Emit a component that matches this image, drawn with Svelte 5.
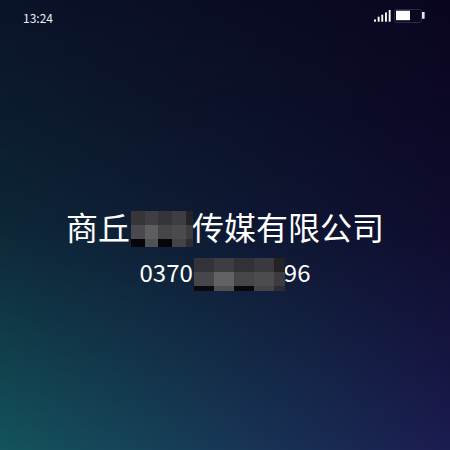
<script lang="ts">
	// greys of the blurred-out blocks, row by row
	const nameCells = [
		'#36363a', '#3f3f43', '#353539', '#3e3e42', '#242427',
		'#4a4a4e', '#5e5e62', '#46464a', '#4b4b4f', '#3d3d41',
		'#06060a', '#525256', '#06060a', '#444448', '#2d2d30'
	];
	const phoneCells = [
		'#343438', '#3e3e42', '#323236', '#3a3a3e', '#232326',
		'#47474b', '#626266', '#46464a', '#4c4c50', '#3c3c40',
		'#0a0a0e', '#4f4f54', '#08080c', '#444448', '#2d2d30'
	];
	const bars = [
		{ x: 0, h: 2.3 },
		{ x: 3.7, h: 5 },
		{ x: 7.3, h: 7 },
		{ x: 11, h: 9.3 },
		{ x: 14.7, h: 11.7 }
	];
</script>

<div class="screen">
	<div class="status">
		<span class="time">13:24</span>
		<div class="icons">
			<svg width="17" height="13" viewBox="0 0 17 13">
				{#each bars as b}
					<rect x={b.x} y={12.7 - b.h} width="1.9" height={b.h} fill="#fff" />
				{/each}
			</svg>
			<svg width="31" height="14" viewBox="0 0 31 14">
				<rect x="0.5" y="0.5" width="27" height="13" rx="2" fill="none" stroke="#2a2a44" />
				<rect x="2" y="1.7" width="14" height="9.5" fill="#fff" />
				<rect x="28" y="3" width="2.6" height="6.7" fill="#e8e8e8" />
			</svg>
		</div>
	</div>

	<div class="card">
		<div class="name">
			<span>商丘</span>
			<div class="mosaic name-mosaic">
				{#each nameCells as c}
					<i style="background: {c}"></i>
				{/each}
			</div>
			<span>传媒有限公司</span>
		</div>
		<div class="phone">
			<span>0370</span>
			<div class="mosaic phone-mosaic">
				{#each phoneCells as c}
					<i style="background: {c}"></i>
				{/each}
			</div>
			<span>96</span>
		</div>
	</div>
</div>

<style>
	:global(body) {
		margin: 0;
	}

	.screen {
		position: relative;
		width: 450px;
		height: 450px;
		box-sizing: border-box;
		overflow: hidden;
		color: #fff;
		font-family: 'Noto Sans CJK SC', 'Noto Sans', sans-serif;
		background: linear-gradient(to right, #0b1429, #0a0620);
	}

	/* bottom corners fade in over the top ones */
	.screen::before {
		content: '';
		position: absolute;
		inset: 0;
		background: linear-gradient(to right, #14545c, #1b1c50);
		mask-image: linear-gradient(
			to bottom,
			transparent 0%,
			rgba(0, 0, 0, 0.1) 22%,
			rgba(0, 0, 0, 0.29) 50%,
			rgba(0, 0, 0, 0.68) 78%,
			#000 100%
		);
	}

	.status,
	.card {
		position: relative;
	}

	.status {
		display: flex;
		justify-content: space-between;
		align-items: flex-start;
		height: 36px;
		padding: 9px 25px 0 23px;
		box-sizing: border-box;
	}

	.time {
		font-size: 12px;
		line-height: 18px;
		color: #eceef2;
	}

	.icons {
		display: flex;
		gap: 3px;
	}

	.icons svg {
		display: block;
	}

	.card {
		display: flex;
		flex-direction: column;
		align-items: center;
		padding-top: 170px;
	}

	.name,
	.phone {
		display: flex;
		align-items: center;
	}

	.name {
		height: 40px;
		font-size: 32px;
		line-height: 40px;
	}

	.phone {
		height: 34px;
		margin-top: 9px;
		font-size: 24px;
		line-height: 34px;
	}

	.mosaic {
		display: grid;
		flex: none;
		margin-left: 1px;
		margin-right: -1px;
		filter: blur(0.4px);
	}

	.mosaic i {
		display: block;
	}

	.name-mosaic {
		width: 62px;
		height: 36px;
		margin-top: 6px;
		grid-template-columns: 13.5fr 13.5fr 14fr 14fr 7fr;
		grid-template-rows: 14fr 14fr 8fr;
	}

	.phone-mosaic {
		width: 91px;
		height: 33px;
		margin-top: 4px;
		grid-template-columns: 20fr 20fr 20fr 20fr 11fr;
		grid-template-rows: 14fr 14.5fr 4.5fr;
	}
</style>
